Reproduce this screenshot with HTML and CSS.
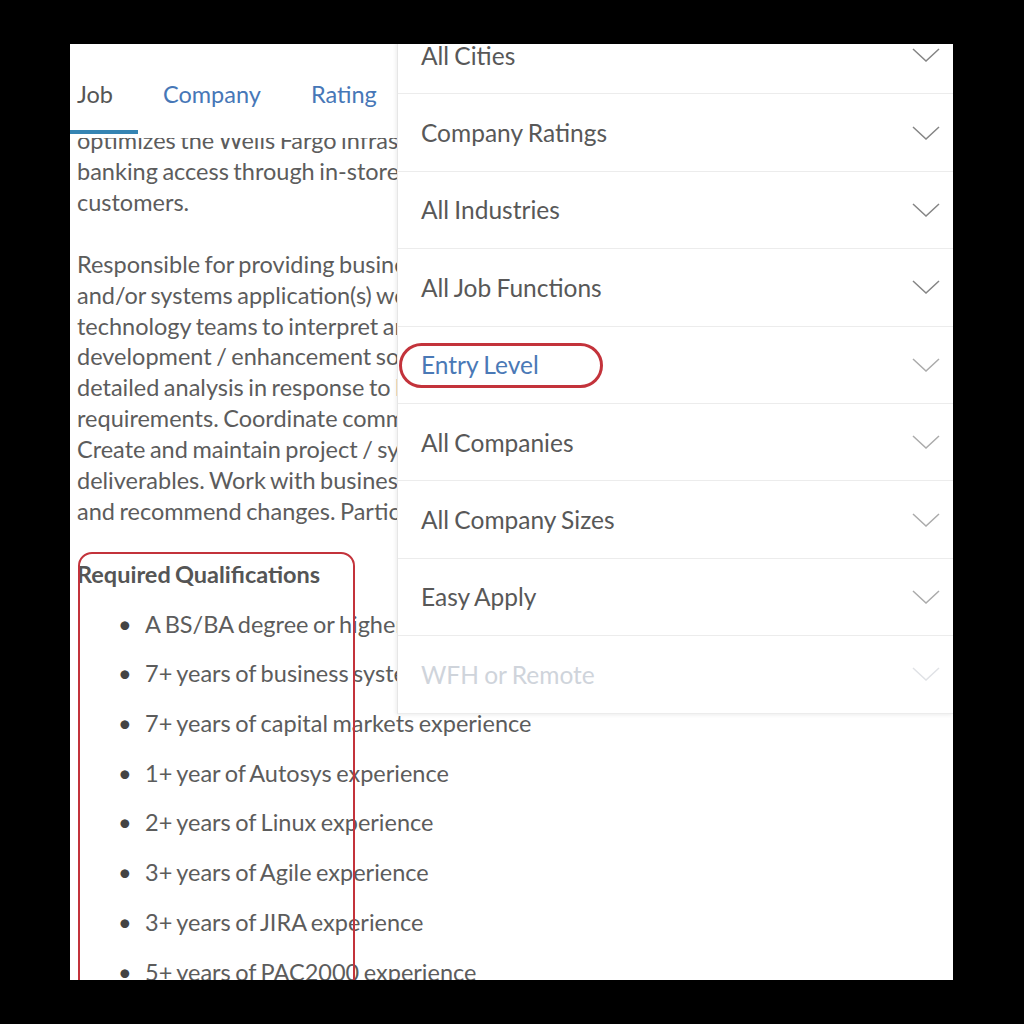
FILE: index.html
```html
<!DOCTYPE html>
<html lang="en">
<head>
    <meta charset="UTF-8">
    <title>Job details</title>
    <link rel="stylesheet" href="styles.css">
</head>
<body>
    <div class="screen">
        <nav class="tabs">
            <a class="tab active">Job</a>
            <a class="tab">Company</a>
            <a class="tab">Rating</a>
        </nav>

        <div class="desc">
            <div class="desc-body">
                <p>optimizes the Wells Fargo infrastructure and provides<br>
                banking access through in-store branches for its<br>
                customers.</p>

                <p>Responsible for providing business systems analysis<br>
                and/or systems application(s) work with business and<br>
                technology teams to interpret and translate<br>
                development / enhancement solutions. Perform<br>
                detailed analysis in response to business<br>
                requirements. Coordinate communication with teams.<br>
                Create and maintain project / system documentation<br>
                deliverables. Work with business partners to review<br>
                and recommend changes. Participate in testing.</p>

                <div class="quals">
                    <h4>Required Qualifications</h4>
                    <ul>
                        <li>A BS/BA degree or higher in technology</li>
                        <li>7+ years of business systems analysis experience</li>
                        <li>7+ years of capital markets experience</li>
                        <li>1+ year of Autosys experience</li>
                        <li>2+ years of Linux experience</li>
                        <li>3+ years of Agile experience</li>
                        <li>3+ years of JIRA experience</li>
                        <li>5+ years of PAC2000 experience</li>
                    </ul>
                    <div class="mark mark-box"></div>
                </div>
            </div>
        </div>

        <!-- filter menu -->
        <div class="filters">
            <div class="filter">All Cities
                <svg class="chev" viewBox="0 0 28 14"><polyline points="1,1 14,13 27,1"/></svg>
            </div>
            <div class="filter">Company Ratings
                <svg class="chev" viewBox="0 0 28 14"><polyline points="1,1 14,13 27,1"/></svg>
            </div>
            <div class="filter">All Industries
                <svg class="chev" viewBox="0 0 28 14"><polyline points="1,1 14,13 27,1"/></svg>
            </div>
            <div class="filter">All Job Functions
                <svg class="chev" viewBox="0 0 28 14"><polyline points="1,1 14,13 27,1"/></svg>
            </div>
            <div class="filter selected">Entry Level
                <svg class="chev light" viewBox="0 0 28 14"><polyline points="1,1 14,13 27,1"/></svg>
                <div class="mark mark-pill"></div>
            </div>
            <div class="filter">All Companies
                <svg class="chev light" viewBox="0 0 28 14"><polyline points="1,1 14,13 27,1"/></svg>
            </div>
            <div class="filter">All Company Sizes
                <svg class="chev light" viewBox="0 0 28 14"><polyline points="1,1 14,13 27,1"/></svg>
            </div>
            <div class="filter">Easy Apply
                <svg class="chev light" viewBox="0 0 28 14"><polyline points="1,1 14,13 27,1"/></svg>
            </div>
            <div class="filter disabled">WFH or Remote
                <svg class="chev faint" viewBox="0 0 28 14"><polyline points="1,1 14,13 27,1"/></svg>
            </div>
        </div>
    </div>
</body>
</html>
```

FILE: styles.css
```css
*{
    padding: 0;
    margin: 0;
    box-sizing: border-box;
}
body{
    background-color: #000;
    font-family: Lato, "Open Sans", sans-serif;
    color: #5c5c5c;
}
.screen{
    position: relative;
    margin: 44px 0 0 70px;
    width: 883px;
    height: 936px;
    background-color: #fff;
    overflow: hidden;
}

.tabs{
    display: flex;
    height: 94px;
    font-size: 23.5px;
    word-spacing: -1px;
    background-color: #fff;

    .tab{
        height: 90px;
        padding: 14px 25px 0;
        border-bottom: 4px solid transparent;
        display: flex;
        align-items: center;
        color: #4777b7;
    }
    .tab.active{
        padding-left: 7px;
        color: #555;
        border-bottom-color: #3584b3;
    }
}

.desc{
    height: 842px;
    overflow: hidden;
    font-size: 23.5px;
    line-height: 30.9px;
    word-spacing: -1.5px;

    .desc-body{
        margin-top: -13px;
        padding-left: 7px;
    }
    p{
        white-space: nowrap;
        margin-bottom: 31px;
    }
}

.quals{
    position: relative;

    h4{
        font-weight: 700;
        color: #555;
        padding-top: 1px;
    }
    ul{
        list-style: none;
        padding-left: 68px;
        white-space: nowrap;
    }
    li{
        margin-top: 18.8px;
    }
    li::before{
        content: "\2022";
        display: inline-block;
        width: 27px;
        margin-left: -27px;
        color: #444;
    }
}

.filters{
    position: absolute;
    left: 327px;
    right: 0;
    top: -27px;
    background-color: #fff;
    border-left: 1px solid #e6e6e6;
    box-shadow: -1px 1px 4px rgba(0,0,0,.08);

    .filter{
        position: relative;
        height: 77.4px;
        padding: 0 13px 0 23px;
        border-bottom: 1.5px solid #ececec;
        display: flex;
        align-items: center;
        justify-content: space-between;
        font-size: 24.5px;
        word-spacing: -1px;
        color: #585858;
    }
    .filter.selected{
        color: #4a79b6;
    }
    .filter.disabled{
        color: #cfd4db;
    }
}

.chev{
    width: 28px;
    height: 14px;
    fill: none;
    stroke: #858585;
    stroke-width: 1.5;

    &.light{
        stroke: #ababab;
    }
    &.faint{
        stroke: #e0e2e6;
    }
}

/* red highlight marks drawn on the screenshot */
.mark{
    position: absolute;
    border: 2.5px solid #c3333b;
    pointer-events: none;
}
.mark-pill{
    left: 1px;
    top: 16px;
    width: 204px;
    height: 45px;
    border-radius: 23px;
    border-width: 3px;
}
.mark-box{
    left: 1px;
    top: -6px;
    width: 277px;
    height: 520px;
    border-radius: 14px;
}
```
